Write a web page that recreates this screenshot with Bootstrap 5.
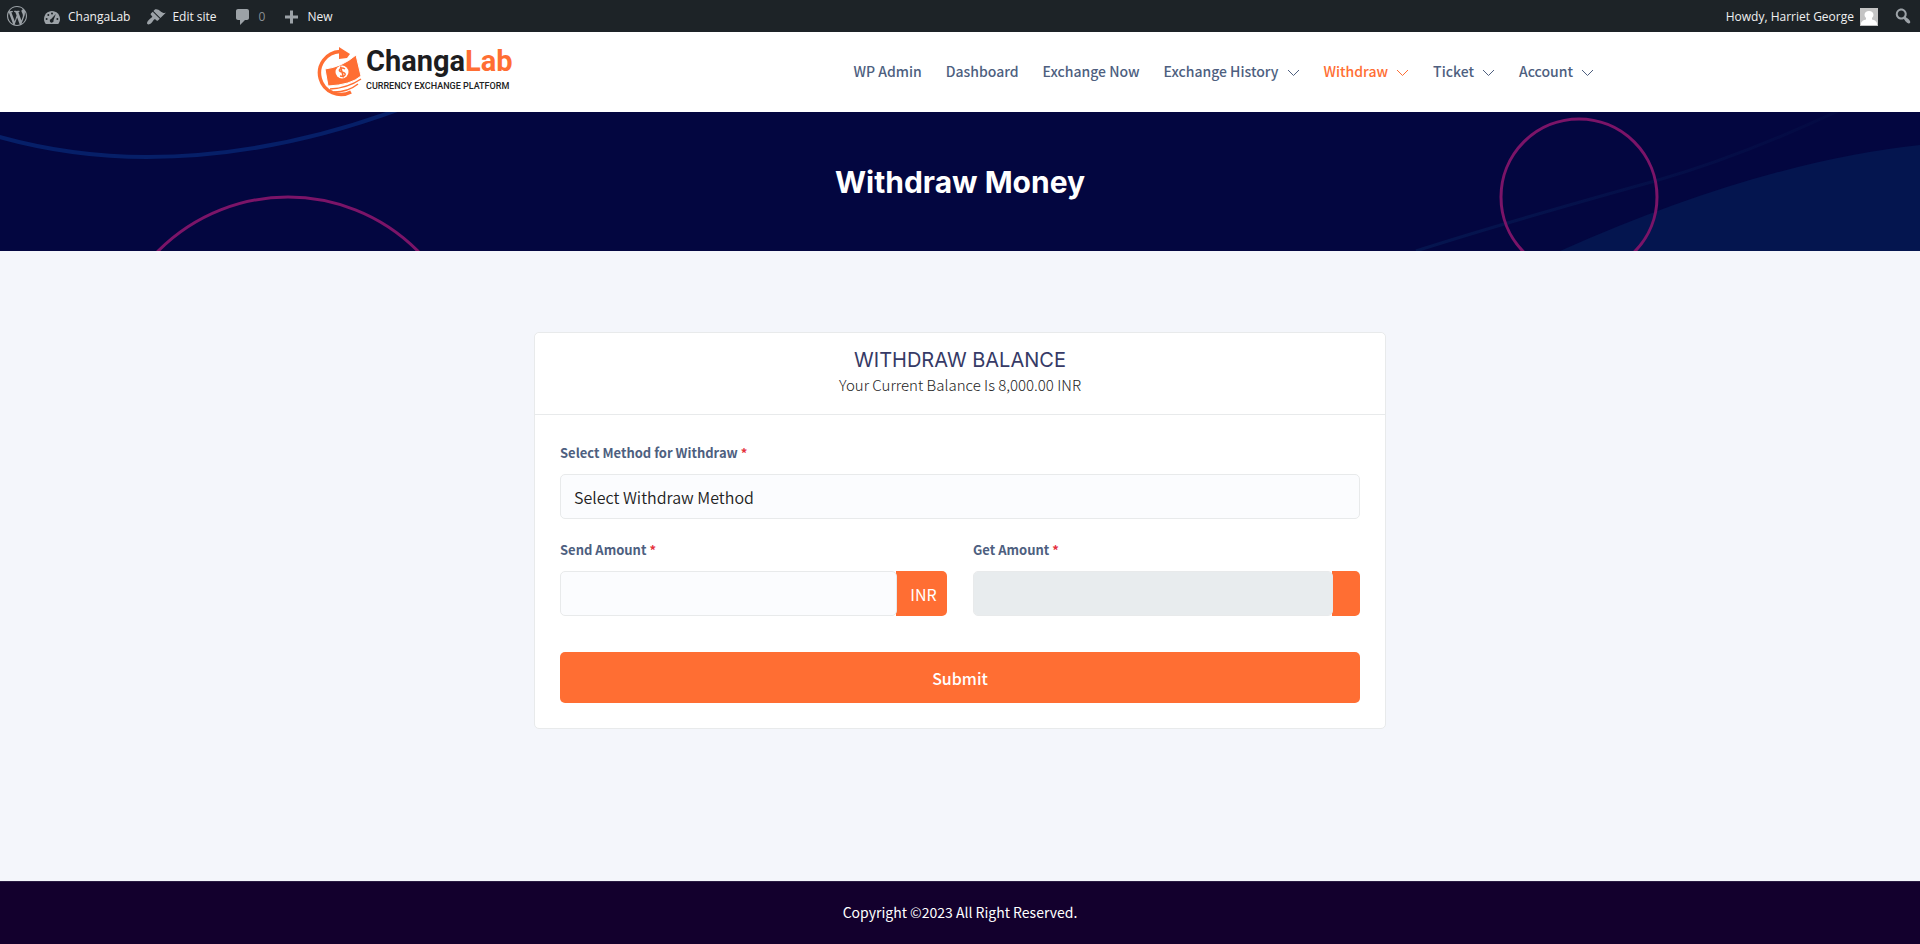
<!DOCTYPE html>
<html lang="en">
<head>
<meta charset="utf-8">
<meta name="viewport" content="width=device-width, initial-scale=1">
<title>Withdraw Money – ChangaLab</title>
<link href="https://cdn.jsdelivr.net/npm/bootstrap@5.3.0/dist/css/bootstrap.min.css" rel="stylesheet">
<style>
  :root { --brand: #ff6e33; --ink: #4e5f7f; --line: #e8eaeb; }
  body { font-family: "Noto Sans CJK SC", "Open Sans", sans-serif; font-size: 14px; background: #f4f6fb; }
  a { text-decoration: none; }

  .admin-bar { background: #1d2327; min-height: 32px; font: 12px/30px "Open Sans", sans-serif; }
  .admin-bar a { color: #f0f0f1; display: flex; align-items: center; padding: 1px 8px 0; gap: 6px; }
  .admin-bar a.icon-only { padding: 0 7px; }
  .admin-bar svg { width: 20px; height: 20px; fill: #9ca2a7; flex: none; }
  .admin-bar svg.avatar-box { width: 18px; height: 18px; }
  .admin-bar a.muted-count { color: #8a9095; }

  .site-header { background: #fff; }
  .header-inner { max-width: 1316px; min-height: 80px; padding: 0 12px; }
  .brand-word { font: 700 29px/24px Roboto, sans-serif; color: #1d1d1f; margin-bottom: 4px; }
  .brand-word span { color: var(--brand); }
  .brand-tag { font: 500 9px/19px Roboto, sans-serif; color: #222; }
  .site-header .nav-link { color: var(--ink); font-size: 14px; font-weight: 500; padding: 0 12px 2px; display: flex; align-items: center; gap: 8px; }
  .site-header .nav-link:hover, .site-header .nav-link.active { color: var(--brand); }
  .chev { width: 13px; height: 8px; margin-top: 3px; fill: none; stroke: currentColor; stroke-width: 1; }

  .hero-band { background: #030640; min-height: 139px; overflow: hidden; }
  .hero-band svg { position: absolute; inset: 0; width: 100%; height: 100%; }
  .hero-band h1 { font: 700 30px/36px Inter, sans-serif; color: #fff; }

  .form-panel { max-width: 852px; margin: 81px auto 150px; border: 1px solid var(--line); border-radius: 5px; }
  .form-panel .card-header { background: #fff; border-color: var(--line); padding: 15px 25px 17px; }
  .form-panel h2 { font: 400 20px/24px Inter, sans-serif; color: #363a66; margin-bottom: 1px; }
  .form-panel .card-body { padding: 24px 25px 25px; }
  .balance-note { font-size: 15px; font-weight: 300; line-height: 24px; color: #222; }
  .form-label { color: var(--ink); font-size: 13px; font-weight: 700; line-height: 27px; }
  .form-label span { color: #e5323e; margin-left: 3px; }
  .field-box { height: 45px; border: 1px solid var(--line); border-radius: 5px; background-color: #fbfcfe; font-size: 16px; font-weight: 350; color: #222; padding: 0 13px; position: relative; z-index: 1; }
  select.field-box { background-image: none; }
  .field-box:disabled { background-color: #e8ecee; }
  .unit-tag { background: var(--brand); color: #fff; font-size: 16px; min-width: 28px; padding: 0 14px; margin-left: -1px; border-radius: 0 5px 5px 0; }
  .field-row { margin-bottom: 17px; }
  .amount-row { --bs-gutter-x: 26px; }
  .btn-brand { background: var(--brand); color: #fff; height: 51px; border-radius: 5px; font-size: 16px; font-weight: 500; margin-top: 36px; }
  .btn-brand:hover { background: #f2602a; color: #fff; }

  .site-footer { background: #13002d; color: #fff; border-top: 1px solid #2a1b42; min-height: 63px; padding-bottom: 2px; font-size: 14px; }
</style>
</head>
<body class="min-vh-100 d-flex flex-column">

<nav class="admin-bar d-flex justify-content-between" aria-label="Toolbar">
  <div class="d-flex">
    <a href="#" class="icon-only" aria-label="About WordPress"><svg viewBox="0 0 20 20"><path d="M20 10c0-5.51-4.49-10-10-10C4.48 0 0 4.49 0 10c0 5.52 4.48 10 10 10 5.51 0 10-4.48 10-10zM7.78 15.37L4.37 6.22c.55-.02 1.17-.08 1.17-.08.5-.06.44-1.13-.06-1.11 0 0-1.45.11-2.37.11-.18 0-.37 0-.58-.01C4.12 2.69 6.87 1.11 10 1.11c2.33 0 4.45.87 6.05 2.34-.68-.11-1.65.39-1.65 1.58 0 .74.45 1.36.9 2.1.35.61.55 1.36.55 2.46 0 1.49-1.4 5-1.4 5l-3.03-8.37c.54-.02.82-.17.82-.17.5-.05.44-1.25-.06-1.22 0 0-1.44.12-2.38.12-.87 0-2.33-.12-2.33-.12-.5-.03-.56 1.2-.06 1.22l.92.08 1.26 3.41zM17.41 10c.24-.64.74-1.87.43-4.25.7 1.29 1.05 2.71 1.05 4.25 0 3.29-1.73 6.24-4.4 7.78.97-2.59 1.94-5.2 2.92-7.78zM6.1 18.09C3.12 16.65 1.11 13.53 1.11 10c0-1.3.23-2.48.72-3.59C3.25 10.3 4.67 14.2 6.1 18.09zm4.03-6.63l2.58 6.98c-.86.29-1.76.45-2.71.45-.79 0-1.57-.11-2.29-.33.81-2.38 1.62-4.74 2.42-7.1z"/></svg></a>
    <a href="#"><svg viewBox="0 0 20 20"><path d="M3.8 17h12.400C17.300 15.600 18 13.900 18 12c0-4.400-3.600-8-8-8s-8 3.600-8 8c0 1.900.7 3.600 1.800 5z"/><g fill="#1d2327"><circle cx="10" cy="6.500" r="1"/><circle cx="6.300" cy="8" r="1"/><circle cx="4.600" cy="12" r="1"/><circle cx="15.400" cy="12" r="1"/><path d="M13.800 7l-2.300 6.200a1.900 1.900 0 1 1-2.300-1.300z"/></g></svg>ChangaLab</a>
    <a href="#"><svg viewBox="0 0 20 20"><path d="M14.480 11.060L7.410 3.990l1.500-1.500c.5-.56 2.300-.47 3.510.32 1.210.8 1.430 1.280 2.910 2.100 1.180.64 2.450 1.260 4.450.85zm-.71.71L6.700 4.700 4.930 6.470c-.39.39-.39 1.020 0 1.410l1.060 1.060c.39.39.39 1.030 0 1.420-.6.6-1.430 1.110-2.210 1.690-.35.26-.7.53-1.010.84C1.430 14.230.4 16.080 1.400 17.070c.99 1 2.840-.03 4.180-1.360.31-.31.58-.66.85-1.020.57-.78 1.080-1.610 1.690-2.210.39-.39 1.020-.39 1.410 0l1.060 1.060c.39.39 1.020.39 1.410 0z"/></svg>Edit site</a>
    <a href="#" class="muted-count"><svg viewBox="0 0 20 20"><path d="M5 2h9c1.100 0 2 .9 2 2v7c0 1.100-.9 2-2 2h-2l-5 5v-5H5c-1.100 0-2-.9-2-2V4c0-1.100.9-2 2-2z"/></svg>0</a>
    <a href="#"><svg viewBox="0 0 20 20"><path d="M17 8.500v3h-5v5H9v-5H4v-3h5v-5h3v5h5z"/></svg>New</a>
  </div>
  <div class="d-flex">
    <a href="#">Howdy, Harriet George
      <svg class="avatar-box" viewBox="0 0 18 18"><path fill="#c4c4c4" d="M0 0h18v18H0z"/><path fill="#fff" d="M1 17v-1c0-3 3-4 5-4.500V10C5 9 4.500 8 4.500 7 4.500 4.500 6.500 3 9 3s4.500 1.500 4.500 4c0 1-.5 2-1.500 3v1.500c2 .5 5 1.500 5 4.500v1z"/></svg></a>
    <a href="#" class="icon-only" aria-label="Search"><svg viewBox="0 0 20 20"><path d="M12.140 4.180c1.870 1.870 2.110 4.750.72 6.890.12.1.22.21.36.31.2.16.47.36.81.59.34.24.56.39.66.47.42.31.73.57.94.78.32.32.6.65.84 1 .25.35.44.69.59 1.040.14.35.21.68.18 1-.02.32-.14.59-.36.81s-.49.34-.81.36c-.31.02-.65-.04-.99-.19-.35-.14-.7-.34-1.040-.59-.35-.24-.68-.52-1-.84-.21-.21-.47-.52-.77-.93-.1-.13-.25-.35-.47-.66-.22-.32-.4-.57-.56-.78-.16-.2-.29-.35-.44-.5-2.070 1.090-4.690.76-6.440-.98-2.140-2.150-2.140-5.640 0-7.780 2.150-2.150 5.630-2.150 7.780 0zm-1.410 6.360c1.360-1.370 1.360-3.580 0-4.950-1.370-1.370-3.590-1.370-4.950 0-1.370 1.370-1.370 3.580 0 4.950 1.360 1.370 3.580 1.370 4.950 0z"/></svg></a>
  </div>
</nav>

<header class="site-header">
  <div class="header-inner mx-auto d-flex align-items-center justify-content-between">
    <a href="#" class="d-flex align-items-center gap-1">
      <svg width="48" height="52" viewBox="0 0 48 52" aria-hidden="true">
        <path d="M37 46A21.500 21.500 0 1 1 26 5.500" fill="none" stroke="#ff6e33" stroke-width="3.500"/>
        <path d="M25 1l11 7-3 4-8 1z" fill="#ff6e33"/>
        <path d="M11 23q17-2 31-14l5 21q-10 9-33 10z" fill="#ff6e33" stroke="#fff" stroke-width="1"/>
        <path d="M16 43q18-1 31-10M20 46q14 0 24-8" fill="none" stroke="#ff6e33" stroke-width="1.500"/>
        <circle cx="28" cy="26" r="6.500" fill="#fff"/>
        <path d="M31 23q-3-2-5 0t2 3 3 3-5 1M26.500 20.500l3 11" fill="none" stroke="#ff6e33" stroke-width="1.500"/>
      </svg>
      <span class="d-flex flex-column">
        <span class="brand-word">Changa<span>Lab</span></span>
        <span class="brand-tag">CURRENCY EXCHANGE PLATFORM</span>
      </span>
    </a>
    <nav class="nav" aria-label="Main">
      <a class="nav-link" href="#">WP Admin</a>
      <a class="nav-link" href="#">Dashboard</a>
      <a class="nav-link" href="#">Exchange Now</a>
      <a class="nav-link" href="#">Exchange History <svg class="chev" viewBox="0 0 13 8"><path d="M1 1l5.500 5.500L12 1"/></svg></a>
      <a class="nav-link active" href="#" aria-current="page">Withdraw <svg class="chev" viewBox="0 0 13 8"><path d="M1 1l5.500 5.500L12 1"/></svg></a>
      <a class="nav-link" href="#">Ticket <svg class="chev" viewBox="0 0 13 8"><path d="M1 1l5.500 5.500L12 1"/></svg></a>
      <a class="nav-link" href="#">Account <svg class="chev" viewBox="0 0 13 8"><path d="M1 1l5.500 5.500L12 1"/></svg></a>
    </nav>
  </div>
</header>

<section class="hero-band position-relative d-flex align-items-center justify-content-center">
  <svg viewBox="0 0 1920 139" preserveAspectRatio="xMidYMid slice" aria-hidden="true">
    <defs>
      <linearGradient id="fadeLine" gradientUnits="userSpaceOnUse" x1="1416" y1="139" x2="1840" y2="0"><stop offset="0" stop-color="#05154f"/><stop offset="1" stop-color="#040a43"/></linearGradient>
    </defs>
    <path d="M-4 24Q70 45 147 45Q270 45 400-3" fill="none" stroke="#061f68" stroke-width="4"/>
    <path d="M1416 139Q1500 112 1655 69Q1740 45 1840-2" fill="none" stroke="url(#fadeLine)" stroke-width="3"/>
    <path d="M1560 139Q1760 50 1920 33V139z" fill="#04154f"/>
    <circle cx="288" cy="268" r="183" fill="none" stroke="#7b1468" stroke-width="3"/>
    <circle cx="1579" cy="85" r="78" fill="none" stroke="#7b1468" stroke-width="3"/>
  </svg>
  <h1 class="m-0 position-relative">Withdraw Money</h1>
</section>

<main class="flex-grow-1 px-3">
  <form class="card form-panel">
    <div class="card-header text-center">
      <h2>WITHDRAW BALANCE</h2>
      <p class="balance-note m-0">Your Current Balance Is 8,000.00 INR</p>
    </div>
    <div class="card-body">
      <div class="field-row">
        <label class="form-label" for="method">Select Method for Withdraw<span>*</span></label>
        <select class="form-select field-box" id="method"><option>Select Withdraw Method</option></select>
      </div>
      <div class="row amount-row">
        <div class="col-md-6">
          <label class="form-label" for="send">Send Amount<span>*</span></label>
          <div class="d-flex">
            <input class="form-control field-box" id="send" type="text">
            <span class="unit-tag d-flex align-items-center">INR</span>
          </div>
        </div>
        <div class="col-md-6">
          <label class="form-label" for="get">Get Amount<span>*</span></label>
          <div class="d-flex">
            <input class="form-control field-box" id="get" type="text" disabled>
            <span class="unit-tag d-flex align-items-center"></span>
          </div>
        </div>
      </div>
      <button type="submit" class="btn btn-brand w-100">Submit</button>
    </div>
  </form>
</main>

<footer class="site-footer d-flex align-items-center justify-content-center">Copyright ©2023 All Right Reserved.</footer>

<script src="https://cdn.jsdelivr.net/npm/bootstrap@5.3.0/dist/js/bootstrap.bundle.min.js"></script>
</body>
</html>
